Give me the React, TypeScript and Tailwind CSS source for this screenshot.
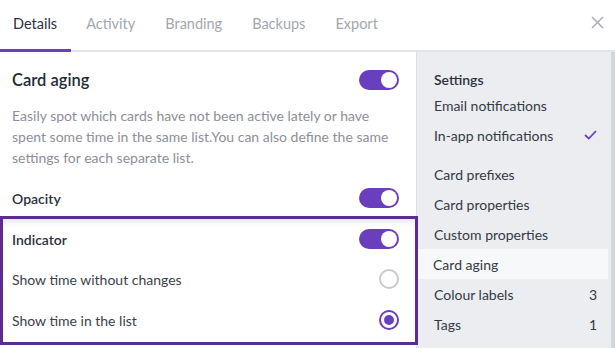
import React from "react";

function Toggle() {
  return (
    <div className="relative w-[40px] h-[20px] rounded-full bg-[#6a3fbe]">
      <div className="absolute right-[2px] top-[2px] w-[16px] h-[16px] rounded-full bg-white" />
    </div>
  );
}

function Radio({ checked }: { checked?: boolean }) {
  return checked ? (
    <div className="w-[20px] h-[20px] rounded-full border-[2px] border-[#6a3fbe] flex items-center justify-center">
      <div className="w-[10px] h-[10px] rounded-full bg-[#6a3fbe]" />
    </div>
  ) : (
    <div className="w-[20px] h-[20px] rounded-full border-[2px] border-[#c9cacc]" />
  );
}

const tabs = ["Details", "Activity", "Branding", "Backups", "Export"];

export default function App() {
  return (
    <div
      className="w-[615px] h-[348px] overflow-hidden bg-white flex flex-col"
      style={{ fontFamily: "Lato, 'Open Sans', sans-serif" }}
    >
      <div className="h-[52px] shrink-0 flex items-stretch border-b-2 border-[#e3e4e8] relative">
        {tabs.map((t, i) => (
          <div
            key={t}
            className={
              i === 0
                ? "pl-[13px] pr-[14px] pb-[3px] flex items-center text-[14.5px] text-[#2c323c] relative"
                : "px-[15px] pb-[3px] flex items-center text-[14.5px] text-[#a2a7ae]"
            }
          >
            {t}
            {i === 0 && (
              <div className="absolute left-0 right-0 bottom-[-2px] h-[3px] bg-[#6a3fbe]" />
            )}
          </div>
        ))}
        <div className="flex-1" />
        <div className="flex items-center pr-[11px] pb-[5px]">
          <svg width="13" height="13" viewBox="0 0 13 13">
            <path d="M1 1 L12 12 M12 1 L1 12" stroke="#a9adb3" strokeWidth="1.5" />
          </svg>
        </div>
      </div>
      <div className="flex flex-1 min-h-0">
        <div className="w-[416px] shrink-0 flex flex-col">
          <div className="pl-[12px] pr-[17px]">
            <div className="flex items-center justify-between pt-[16px]">
              <span className="text-[16.5px] font-semibold text-[#232a35]">Card aging</span>
              <Toggle />
            </div>
            <p className="mt-[12px] text-[14px] leading-[21px] text-[#8b9098]">
              Easily spot which cards have not been active lately or have spent some time in the
              same list.You can also define the same settings for each separate list.
            </p>
            <div className="flex items-center justify-between mt-[20px]">
              <span className="text-[14px] font-semibold text-[#2a313c]">Opacity</span>
              <Toggle />
            </div>
          </div>
          <div className="mt-[7px] w-[418px] h-[129px] border-[3px] border-[#5e2b8e] shadow-[inset_0_6px_6px_-4px_rgba(0,0,0,0.12)] pl-[9px] pr-[16px] relative z-10">
            <div className="flex items-center justify-between pt-[10px]">
              <span className="text-[14px] font-semibold text-[#2a313c]">Indicator</span>
              <Toggle />
            </div>
            <div className="flex items-center justify-between mt-[19px]">
              <span className="text-[14px] text-[#3a414b]">Show time without changes</span>
              <Radio />
            </div>
            <div className="flex items-center justify-between mt-[20px]">
              <span className="text-[14px] text-[#3a414b]">Show time in the list</span>
              <Radio checked />
            </div>
          </div>
        </div>
        <div className="flex-1 flex bg-[#ebedf1] border-l border-[#dcdee3]">
          <div className="flex-1 flex flex-col pr-[3px] pt-[16px] text-[14px] text-[#333a44]">
            <div className="pl-[17px] font-semibold text-[#2a313c] h-[22px] flex items-center">Settings</div>
            <div className="pl-[17px] pr-[11px] h-[30px] flex items-center justify-between">
              Email notifications
            </div>
            <div className="pl-[17px] pr-[11px] h-[30px] flex items-center justify-between">
              <span>In-app notifications</span>
              <svg width="13" height="10" viewBox="0 0 13 10">
                <path d="M1 5 L4.8 8.6 L12 1" fill="none" stroke="#6a3fbe" strokeWidth="1.8" />
              </svg>
            </div>
            <div className="pl-[17px] pr-[11px] h-[30px] mt-[9px] flex items-center">Card prefixes</div>
            <div className="pl-[17px] pr-[11px] h-[30px] flex items-center">Card properties</div>
            <div className="pl-[17px] pr-[11px] h-[30px] flex items-center">Custom properties</div>
            <div className="pl-[16px] pr-[11px] h-[30px] flex items-center bg-[#f7f8fa]">Card aging</div>
            <div className="pl-[17px] pr-[11px] h-[30px] flex items-center justify-between">
              <span>Colour labels</span>
              <span>3</span>
            </div>
            <div className="pl-[17px] pr-[11px] h-[30px] flex items-center justify-between">
              <span>Tags</span>
              <span>1</span>
            </div>
          </div>
          <div className="w-[4px] bg-[#d3d6da]" />
        </div>
      </div>
    </div>
  );
}
